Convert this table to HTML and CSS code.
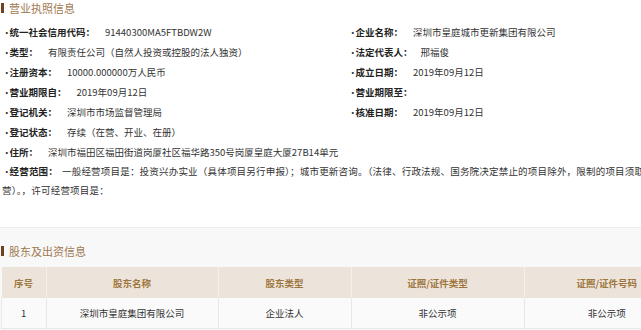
FILE: index.html
```html
<!DOCTYPE html>
<html lang="zh-CN">
<head>
    <meta charset="UTF-8">
    <meta name="viewport" content="width=device-width, initial-scale=1.0">
    <title>企业信息</title>
    <link rel="stylesheet" href="styles.css">
</head>
<body>
    <div class="page">
        <section class="license">
            <h2 class="title">营业执照信息</h2>
            <div class="info">
                <div class="item"><b>统一社会信用代码：</b><span>91440300MA5FTBDW2W</span></div>
                <div class="item"><b>企业名称：</b><span>深圳市皇庭城市更新集团有限公司</span></div>
                <div class="item"><b>类型：</b><span>有限责任公司（自然人投资或控股的法人独资）</span></div>
                <div class="item"><b>法定代表人：</b><span class="wide">邢福俊</span></div>
                <div class="item"><b>注册资本：</b><span>10000.000000万人民币</span></div>
                <div class="item"><b>成立日期：</b><span>2019年09月12日</span></div>
                <div class="item"><b>营业期限自：</b><span>2019年09月12日</span></div>
                <div class="item"><b>营业期限至：</b><span></span></div>
                <div class="item"><b>登记机关：</b><span>深圳市市场监督管理局</span></div>
                <div class="item"><b>核准日期：</b><span>2019年09月12日</span></div>
                <div class="item full"><b>登记状态：</b><span>存续（在营、开业、在册）</span></div>
                <div class="item full"><b>住所：</b><span>深圳市福田区福田街道岗厦社区福华路350号岗厦皇庭大厦27B14单元</span></div>
                <div class="item full text"><b>经营范围：</b><span>一般经营项目是：投资兴办实业（具体项目另行申报）；城市更新咨询。（法律、行政法规、国务院决定禁止的项目除外，限制的项目须取得许可后方可经营）。，许可经营项目是：</span></div>
            </div>
        </section>

        <section class="holders">
            <h2 class="title">股东及出资信息</h2>
            <table class="grid">
                <thead>
                    <tr>
                        <th class="c-no">序号</th>
                        <th class="c-name">股东名称</th>
                        <th class="c-type">股东类型</th>
                        <th class="c-cert">证照/证件类型</th>
                        <th>证照/证件号码</th>
                    </tr>
                </thead>
                <tbody>
                    <tr>
                        <td>1</td>
                        <td>深圳市皇庭集团有限公司</td>
                        <td>企业法人</td>
                        <td>非公示项</td>
                        <td>非公示项</td>
                    </tr>
                </tbody>
            </table>
        </section>
    </div>
</body>
</html>
```

FILE: styles.css
```css
html, body {
    margin: 0;
    background: #fff;
    overflow: hidden;
}

.page {
    width: 700px;
    height: 330px;
    font-family: "Noto Sans CJK SC", "Noto Sans", sans-serif;
    font-size: 9.5px;
    color: #333;
}

.title {
    display: flex;
    align-items: center;
    gap: 5px;
    margin: 0;
    padding-left: 1px;
    height: 16px;
    font-size: 11px;
    font-weight: normal;
    color: #a07850;
}

.title::before {
    content: "";
    width: 3px;
    height: 10px;
    background: #6e4120;
}

.license {
    padding-bottom: 27px;
}

.info {
    display: grid;
    grid-template-columns: 346px 1fr;
    margin-top: 6px;
    padding-left: 2px;
}

.item {
    line-height: 20px;
    white-space: nowrap;
}

.item::before {
    content: "·";
    display: inline-block;
    width: 7.5px;
    text-align: center;
}

.item b {
    font-weight: bold;
    color: #222;
}

.item span {
    padding-left: 10px;
}

.item span.wide {
    padding-left: 8px;
}

.item.full {
    grid-column: 1 / -1;
}

.item.text {
    white-space: normal;
    line-height: 19px;
    letter-spacing: 0.2px;
    margin-right: -28px;
}

.item.text span {
    padding-left: 4px;
}

.holders {
    background: #f8f8f8;
    border-top: 1px solid #eee;
    padding-top: 15px;
    height: 120px;
}

.grid {
    margin-top: 8px;
    margin-left: 1px;
    width: 689px;
    border-collapse: collapse;
    table-layout: fixed;
    text-align: center;
}

.grid th {
    height: 31px;
    padding: 0;
    background: #ece4da;
    color: #9e7640;
    font-weight: bold;
    border-right: 1px solid #f5f0ea;
}

.grid td {
    height: 30px;
    padding: 0;
    background: #fafafa;
    border: 1px solid #e8e8e8;
    border-top: none;
}

.c-no { width: 44px; }
.c-name { width: 171px; }
.c-type { width: 132px; }
.c-cert { width: 172px; }
```
